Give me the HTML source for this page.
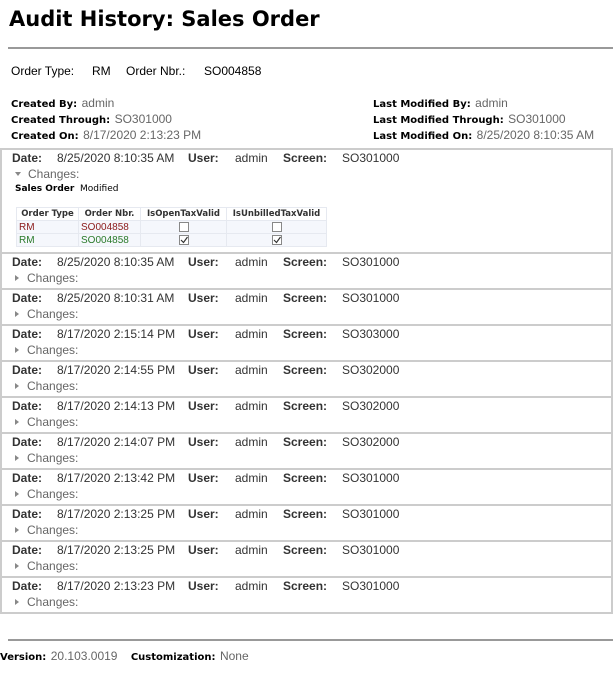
<!DOCTYPE html>
<html><head><meta charset="utf-8"><style>
*{margin:0;padding:0;box-sizing:border-box}
body{width:613px;height:676px;background:#fff;position:relative;overflow:hidden;font-family:"Liberation Sans",Arial,sans-serif;color:#333}
.abs{position:absolute;white-space:nowrap}
h1{position:absolute;left:9px;top:7px;font-family:"DejaVu Sans",Verdana,sans-serif;font-weight:bold;font-size:21px;color:#000}
.hr{position:absolute;left:8px;right:0;height:2px;background:#999}
.lbl{font-family:"DejaVu Sans",Verdana,sans-serif;font-weight:bold;font-size:10px;color:#000}
.val{font-size:12px;color:#666}
.entry{position:absolute;left:0;width:613px;height:38px;border:2px solid #ccc;border-bottom:none}
.row{position:absolute;left:12px;font-size:12px;color:#333;white-space:nowrap}
.row b{font-weight:bold}
.ch{position:absolute;left:15px;font-size:12px;color:#666;white-space:nowrap}
.tri{display:inline-block;width:0;height:0;border-top:3px solid transparent;border-bottom:3px solid transparent;border-left:4px solid #888;margin-right:8px;vertical-align:1px}
.tri.d{border-left:3px solid transparent;border-right:3px solid transparent;border-top:4px solid #888;border-bottom:none;margin-right:7px;vertical-align:2px}
table{position:absolute;left:16px;top:207px;border-collapse:collapse;font-size:10px;table-layout:fixed;width:310px}
td,th{border:1px solid #e6e9f0;height:13px;padding:0 2px;white-space:nowrap;overflow:hidden}
th{font-family:"DejaVu Sans",Verdana,sans-serif;font-size:8.5px;color:#333;font-weight:bold;text-align:center;background:#fff}
td{background:#f5f7fc}
.cb{display:inline-block;width:10px;height:10px;border:1px solid #888;background:#fff;position:relative;vertical-align:middle}
</style></head><body>
<h1>Audit History: Sales Order</h1>
<div class="hr" style="top:47px"></div>
<div class="abs" style="left:11px;top:64px;font-size:12px;color:#000">Order Type:</div>
<div class="abs" style="left:92px;top:64px;font-size:12px;color:#000">RM</div>
<div class="abs" style="left:126px;top:64px;font-size:12px;color:#000">Order Nbr.:</div>
<div class="abs" style="left:204px;top:64px;font-size:12px;color:#000">SO004858</div>
<div class="abs" style="left:11px;top:96px;line-height:14px"><span class="lbl">Created By:</span> <span class="val">admin</span><br><span class="lbl">Created Through:</span> <span class="val">SO301000</span><br><span class="lbl">Created On:</span> <span class="val">8/17/2020 2:13:23 PM</span></div>
<div class="abs" style="left:373px;top:96px;line-height:14px"><span class="lbl">Last Modified By:</span> <span class="val">admin</span><br><span class="lbl">Last Modified Through:</span> <span class="val">SO301000</span><br><span class="lbl">Last Modified On:</span> <span class="val">8/25/2020 8:10:35 AM</span></div>

<div class="entry" style="top:148px;height:106px"></div>
<div class="row" style="top:151px"><b>Date:</b><span style="position:absolute;left:45px">8/25/2020 8:10:35 AM</span><b style="position:absolute;left:176px">User:</b><span style="position:absolute;left:223px">admin</span><b style="position:absolute;left:271px">Screen:</b><span style="position:absolute;left:330px">SO301000</span></div>
<div class="ch" style="top:167px"><span class="tri d"></span>Changes:</div>
<div class="abs" style="left:15px;top:184px;font-family:'DejaVu Sans',Verdana,sans-serif;font-size:9px;color:#000"><b>Sales Order</b>&nbsp; Modified</div>
<table>
<tr><th style="width:62px">Order Type</th><th style="width:62px">Order Nbr.</th><th style="width:86px">IsOpenTaxValid</th><th style="width:100px">IsUnbilledTaxValid</th></tr>
<tr><td style="color:#8b1a1a">RM</td><td style="color:#8b1a1a">SO004858</td><td style="text-align:center"><span class="cb"></span></td><td style="text-align:center"><span class="cb"></span></td></tr>
<tr><td style="color:#2a7a2a">RM</td><td style="color:#2a7a2a">SO004858</td><td style="text-align:center"><span class="cb"><svg width="10" height="10" style="position:absolute;left:-1px;top:-1px"><path d="M2 5 L4.5 7.5 L8.5 2" stroke="#333" stroke-width="1.2" fill="none"/></svg></span></td><td style="text-align:center"><span class="cb"><svg width="10" height="10" style="position:absolute;left:-1px;top:-1px"><path d="M2 5 L4.5 7.5 L8.5 2" stroke="#333" stroke-width="1.2" fill="none"/></svg></span></td></tr>
</table>

<div id="rest"></div>
<script>
var d=[["8/25/2020 8:10:35 AM","SO301000"],["8/25/2020 8:10:31 AM","SO301000"],["8/17/2020 2:15:14 PM","SO303000"],["8/17/2020 2:14:55 PM","SO302000"],["8/17/2020 2:14:13 PM","SO302000"],["8/17/2020 2:14:07 PM","SO302000"],["8/17/2020 2:13:42 PM","SO301000"],["8/17/2020 2:13:25 PM","SO301000"],["8/17/2020 2:13:25 PM","SO301000"],["8/17/2020 2:13:23 PM","SO301000"]];
var h="";
for(var i=0;i<d.length;i++){var t=252+i*36;
h+='<div class="entry" style="top:'+t+'px"></div>';
h+='<div class="row" style="top:'+(t+3)+'px"><b>Date:</b><span style="position:absolute;left:45px">'+d[i][0]+'</span><b style="position:absolute;left:176px">User:</b><span style="position:absolute;left:223px">admin</span><b style="position:absolute;left:271px">Screen:</b><span style="position:absolute;left:330px">'+d[i][1]+'</span></div>';
h+='<div class="ch" style="top:'+(t+19)+'px"><span class="tri"></span>Changes:</div>';}
h+='<div style="position:absolute;left:0;top:612px;width:613px;height:2px;background:#ccc"></div>';
document.getElementById("rest").innerHTML=h;
</script>
<div class="hr" style="top:639px"></div>
<div class="abs" style="left:0;top:647px"><span class="lbl">Version:</span> <span class="val">20.103.0019</span>&nbsp;&nbsp;&nbsp;<span class="lbl">Customization:</span> <span class="val">None</span></div>
</body></html>
